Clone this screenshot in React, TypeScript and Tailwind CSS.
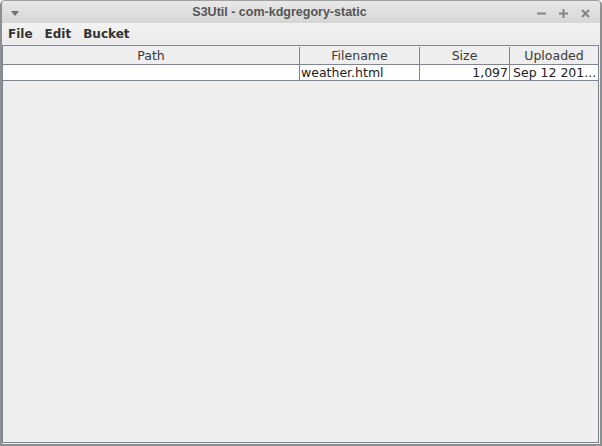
import React from "react";

export default function App() {
  const font = { fontFamily: '"DejaVu Sans", "Liberation Sans", sans-serif' };
  return (
    <div
      className="w-[602px] h-[446px] flex flex-col bg-[#eeeeee] border-l-2 border-r-2 border-b-2 border-[#8e8e8e] rounded-t-[5px] overflow-hidden"
      style={font}
    >
      {/* title bar */}
      <div className="h-[23px] flex items-center relative bg-gradient-to-b from-[#e9e9e9] to-[#d5d5d5] border-t border-[#a0a0a0]">
        <div className="w-[17px] flex justify-end pt-[3px]">
          <svg width="8" height="5" viewBox="0 0 8 5">
            <path d="M0 0 L8 0 L4 5 Z" fill="#6e6e6e" />
          </svg>
        </div>
        <div
          className="flex-1 text-center text-[12.5px] font-bold text-[#555555] pl-[3px] pt-[1px]"
          style={{ fontFamily: '"Liberation Sans", Arial, sans-serif' }}
        >
          S3Util - com-kdgregory-static
        </div>
        <div className="flex items-center gap-[13px] pr-[10px] pt-[2px]">
          <svg width="9" height="9" viewBox="0 0 9 9">
            <rect x="0" y="3.5" width="9" height="2" fill="#858585" />
          </svg>
          <svg width="9" height="9" viewBox="0 0 9 9">
            <rect x="0" y="3.5" width="9" height="2" fill="#858585" />
            <rect x="3.5" y="0" width="2" height="9" fill="#858585" />
          </svg>
          <svg width="9" height="9" viewBox="0 0 9 9">
            <path d="M1 1 L8 8 M8 1 L1 8" stroke="#858585" strokeWidth="2" />
          </svg>
        </div>
      </div>
      {/* menu bar */}
      <div className="h-[21px] flex items-center gap-[12px] px-[6px] pt-[1px] text-[12px] font-bold text-[#333333] bg-gradient-to-b from-[#f2f2f2] to-[#ebebeb]">
        <span>File</span>
        <span>Edit</span>
        <span>Bucket</span>
      </div>
      {/* content */}
      <div className="flex-1 flex flex-col pr-[1px] pb-[1px] pt-[1px]">
        <div className="flex-1 border border-[#7b8595] bg-[#eeeeee] flex flex-col">
          <div className="grid grid-cols-[297px_120px_90px_1fr] h-[19px] border-b border-[#7b8595] text-[12.5px] text-[#3a3a3a] bg-[#eeeeee] pt-[1px]">
            <div className="border-r border-[#7b8595] flex items-center justify-center">Path</div>
            <div className="border-r border-[#7b8595] flex items-center justify-center">Filename</div>
            <div className="border-r border-[#7b8595] flex items-center justify-center">Size</div>
            <div className="flex items-center justify-center">Uploaded</div>
          </div>
          <div className="grid grid-cols-[297px_120px_90px_1fr] h-[16px] border-b border-[#7b8595] text-[12.5px] text-[#222222] bg-white leading-[15px]">
            <div className="border-r border-[#7b8595]"></div>
            <div className="border-r border-[#7b8595] pl-[1px] whitespace-nowrap overflow-hidden">weather.html</div>
            <div className="border-r border-[#7b8595] pr-[1px] text-right">1,097</div>
            <div className="pl-[3px] whitespace-nowrap overflow-hidden">Sep 12 201...</div>
          </div>
        </div>
      </div>
    </div>
  );
}
